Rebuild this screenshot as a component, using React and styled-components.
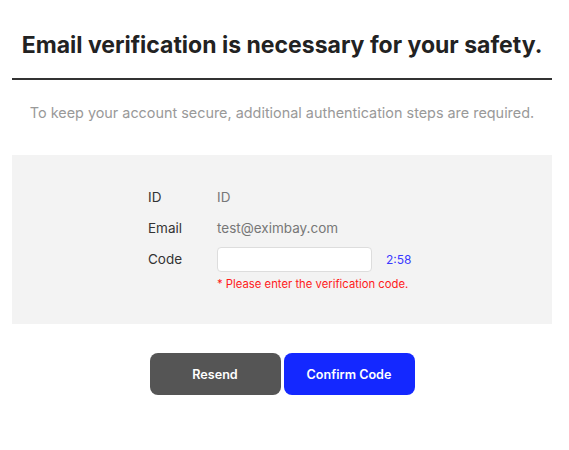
import React from 'react';
import styled, { createGlobalStyle } from 'styled-components';

const GlobalStyle = createGlobalStyle`
  * { box-sizing: border-box; }
  body {
    margin: 0;
    background: #fff;
    font-family: Inter, "Noto Sans", sans-serif;
  }
`;

const Page = styled.div`
  width: 540px;
  margin-left: 12px;
  padding-top: 28px;
`;

const Title = styled.h2`
  margin: 0;
  text-align: center;
  font-size: 23px;
  font-weight: 700;
  color: #222;
  line-height: 34px;
  padding-bottom: 16px;
  border-bottom: 2px solid #333;
`;

const Desc = styled.p`
  margin: 0;
  padding: 23px 0 32px;
  text-align: center;
  font-size: 14.4px;
  color: #999;
  line-height: 20px;
`;

const Box = styled.div`
  background: #f3f3f3;
  height: 169px;
  padding: 32px 0 0 136px;
`;

const Grid = styled.div`
  display: grid;
  grid-template-columns: 69px auto;
  grid-template-rows: 20px 20px 20px auto;
  row-gap: 11px;
  align-items: center;
`;

const Label = styled.div`
  font-size: 13.5px;
  color: #333;
  line-height: 20px;
`;

const Value = styled.div`
  font-size: 13.5px;
  color: #777;
  line-height: 20px;
`;

const CodeRow = styled.div`
  display: flex;
  align-items: center;
  gap: 14px;
`;

const Input = styled.input`
  width: 155px;
  height: 25px;
  border: 1px solid #ddd;
  border-radius: 4px;
  background: #fff;
  outline: none;
  padding: 0 8px;
  font-family: inherit;
`;

const Timer = styled.span`
  font-size: 12px;
  color: #3a3aff;
`;

const Error = styled.div`
  grid-column: 2;
  margin-top: -4px;
  font-size: 11.3px;
  color: #ff1a1a;
  line-height: 16px;
`;

const Buttons = styled.div`
  display: flex;
  justify-content: center;
  gap: 3px;
  padding-top: 29px;
`;

const Button = styled.button`
  width: 131px;
  height: 42px;
  border: none;
  border-radius: 8px;
  background: ${p => (p.primary ? '#1428ff' : '#555')};
  color: #fff;
  font-family: inherit;
  font-size: 12.6px;
  font-weight: 600;
  cursor: pointer;
`;

export default function App() {
  return (
    <>
      <GlobalStyle />
      <Page>
        <Title>Email verification is necessary for your safety.</Title>
        <Desc>To keep your account secure, additional authentication steps are required.</Desc>
        <Box>
          <Grid>
            <Label>ID</Label>
            <Value>ID</Value>
            <Label>Email</Label>
            <Value>test@eximbay.com</Value>
            <Label>Code</Label>
            <CodeRow>
              <Input type="text" />
              <Timer>2:58</Timer>
            </CodeRow>
            <Error>* Please enter the verification code.</Error>
          </Grid>
        </Box>
        <Buttons>
          <Button>Resend</Button>
          <Button primary>Confirm Code</Button>
        </Buttons>
      </Page>
    </>
  );
}
